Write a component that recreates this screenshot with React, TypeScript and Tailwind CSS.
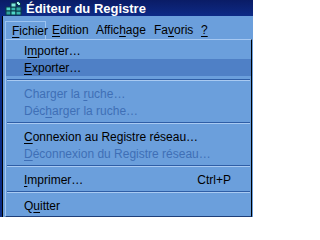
const font = { fontFamily: '"Liberation Sans", Arial, sans-serif' };

function U({ children }: { children: string }) {
  return <span className="underline underline-offset-[2px] decoration-1">{children}</span>;
}

function RegIcon() {
  return (
    <svg width="18" height="16" viewBox="0 0 18 16">
      <rect x="1" y="7" width="5" height="4" fill="#4fd6c8" stroke="#0a3a4a" strokeWidth="1" />
      <rect x="6" y="7" width="5" height="4" fill="#39b7b0" stroke="#0a3a4a" strokeWidth="1" />
      <rect x="1" y="11" width="5" height="4" fill="#2fa6a0" stroke="#0a3a4a" strokeWidth="1" />
      <rect x="6" y="11" width="5" height="4" fill="#4fd6c8" stroke="#0a3a4a" strokeWidth="1" />
      <rect x="11" y="11" width="5" height="4" fill="#39b7b0" stroke="#0a3a4a" strokeWidth="1" />
      <rect x="11" y="7" width="5" height="4" fill="#2fa6a0" stroke="#0a3a4a" strokeWidth="1" />
      <rect x="6" y="3" width="5" height="4" fill="#7fe8dc" stroke="#0a3a4a" strokeWidth="1" />
      <path d="M13 1 L16 4 L14 6 L11 3 Z" fill="#9ff0e6" stroke="#0a3a4a" strokeWidth="1" />
    </svg>
  );
}

type Row =
  | { sep: true }
  | { sep?: false; label: React.ReactNode; disabled?: boolean; active?: boolean; shortcut?: string };

export default function App() {
  const rows: Row[] = [
    { label: <>I<U>m</U>porter…</> },
    { label: <><U>E</U>xporter…</>, active: true },
    { sep: true },
    { label: <>Charger la <U>r</U>uche…</>, disabled: true },
    { label: <>Déc<U>h</U>arger la ruche…</>, disabled: true },
    { sep: true },
    { label: <><U>C</U>onnexion au Registre réseau…</> },
    { label: <><U>D</U>éconnexion du Registre réseau…</>, disabled: true },
    { sep: true },
    { label: <><U>I</U>mprimer…</>, shortcut: "Ctrl+P" },
    { sep: true },
    { label: <>Q<U>u</U>itter</> },
  ];

  const menus = [
    { label: <><U>F</U>ichier</>, w: "w-[41px]", open: true },
    { label: <><U>E</U>dition</>, w: "w-[44px]" },
    { label: <>Affic<U>h</U>age</>, w: "w-[58px]" },
    { label: <>Fa<U>v</U>oris</>, w: "w-[47px]" },
    { label: <U>?</U>, w: "w-[30px]" },
  ];

  return (
    <div className="relative w-[253px] h-[217px] overflow-hidden bg-[#0b2a7e] text-black" style={font}>
      {/* Title bar */}
      <div className="h-[16px] flex items-center gap-[3px] pl-[5px] bg-gradient-to-b from-[#0a1c66] to-[#0d2a86]">
        <RegIcon />
        <span className="text-[13px] font-bold text-white leading-none">Éditeur du Registre</span>
      </div>

      {/* Window body */}
      <div className="flex h-[201px]">
        <div className="w-[2px] bg-[#0b2c86]" />
        <div className="w-px bg-black" />
        <div className="flex-1 bg-[#6b9fdc]">
          {/* Menu bar */}
          <div className="flex h-[23px] pt-[5px] pl-[2px] text-[12px]">
            {menus.map((m, i) => (
              <div
                key={i}
                className={`${m.w} h-[18px] flex items-center pl-[6px] ${
                  m.open ? "border border-[#9cc3f0] border-b-0 pl-[5px]" : ""
                }`}
              >
                {m.label}
              </div>
            ))}
          </div>
        </div>
      </div>

      {/* Dropdown */}
      <div className="absolute left-[5px] top-[39px] w-[247px] h-[178px] bg-[#6b9fdc] border-t border-l border-[#a6c8f2] border-r border-r-black border-b border-b-[#1e3f7a] pt-[2px] text-[12px]">
        {rows.map((r, i) =>
          r.sep ? (
            <div key={i} className="h-[9px] flex flex-col pt-[3px] px-[1px]">
              <div className="h-px bg-[#2f5ea6]" />
              <div className="h-px bg-[#a9caf2]" />
            </div>
          ) : (
            <div
              key={i}
              className={`h-[17px] flex items-center pl-[18px] pr-[20px] ${
                r.active ? "bg-[#4f80c6]" : ""
              } ${r.disabled ? "text-[#3f6fb6]" : "text-black"}`}
            >
              <span className="flex-1 whitespace-nowrap">{r.label}</span>
              {r.shortcut && <span>{r.shortcut}</span>}
            </div>
          )
        )}
      </div>
    </div>
  );
}
